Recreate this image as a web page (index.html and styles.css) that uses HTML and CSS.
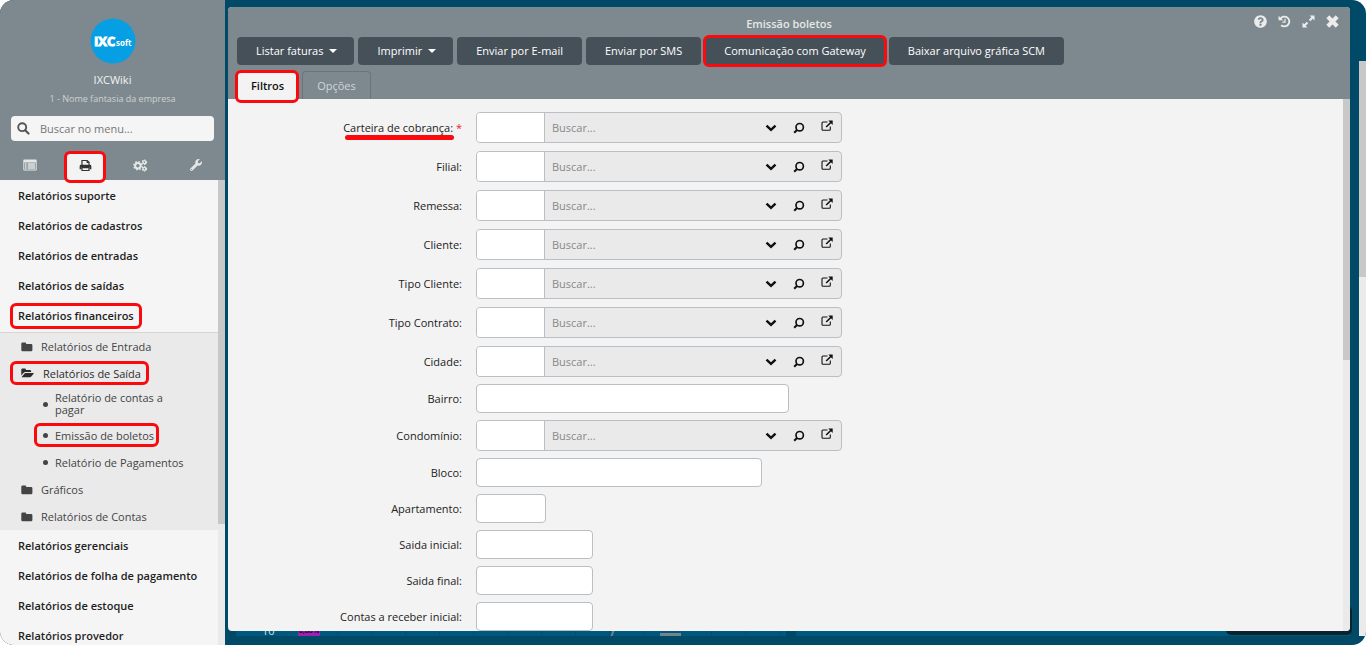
FILE: index.html
```html
<!DOCTYPE html>
<html lang="pt-BR">
<head>
<meta charset="utf-8">
<meta name="viewport" content="width=device-width, initial-scale=1">
<title>Emissão boletos</title>
<link rel="stylesheet" href="styles.css">
</head>
<body>
<svg class="sprite" aria-hidden="true">
  <symbol id="i-search" viewBox="0 0 14 14"><circle cx="5.6" cy="5.6" r="4.3" fill="none" stroke="currentColor" stroke-width="2"/><path d="M8.8 8.8l3.6 3.6" stroke="currentColor" stroke-width="2.3" stroke-linecap="round"/></symbol>
  <symbol id="i-list" viewBox="0 0 14 12"><path fill="currentColor" fill-rule="evenodd" d="M1.2 0.5h11.6q.9 0 .9.9v9.2q0 .9-.9.9H1.2q-.9 0-.9-.9V1.4q0-.9.9-.9zM1.3 3.4v7.1h11.4V3.4z"/><path d="M2 5h1.6M2 7h1.6M2 9h1.6M4.600 5h7.400M4.600 7h7.400M4.600 9h7.400" stroke="currentColor" stroke-width="1.400"/></symbol>
  <symbol id="i-print" viewBox="0 0 14 14"><path fill="none" stroke="currentColor" stroke-width="1.300" d="M3.200 6.500V1.600h5.600l2 2v2.900M3.200 9.200h7.600v3.200H3.200z"/><path fill="currentColor" d="M2.200 6.200h9.600q1.500 0 1.500 1.500v3.300h-1.900V8.600H2.600V11H.7V7.700q0-1.500 1.500-1.500zM8.200 1.200v3h2.900z"/></symbol>
  <symbol id="i-cogs" viewBox="0 0 16 14"><g fill="none" stroke="currentColor"><circle cx="5.2" cy="7.2" r="3" stroke-width="2.200"/><circle cx="5.2" cy="7.2" r="4.400" stroke-width="1.500" stroke-dasharray="1.73 1.73"/><circle cx="12.200" cy="3.400" r="1.600" stroke-width="1.500"/><circle cx="12.200" cy="3.400" r="2.400" stroke-width="1.100" stroke-dasharray="1.250 1.250"/><circle cx="12.200" cy="10.600" r="1.600" stroke-width="1.500"/><circle cx="12.200" cy="10.600" r="2.400" stroke-width="1.100" stroke-dasharray="1.250 1.250"/></g></symbol>
  <symbol id="i-wrench" viewBox="0 0 512 512"><path fill="currentColor" d="M507.73 109.1c-2.24-9.03-13.54-12.09-20.12-5.51l-74.36 74.36-67.88-11.31-11.31-67.88 74.36-74.36c6.62-6.62 3.43-17.9-5.66-20.16-47.38-11.74-99.55.91-136.58 37.93-39.64 39.64-50.55 97.1-34.05 147.2L18.74 402.76c-24.99 24.99-24.99 65.51 0 90.5 24.99 24.99 65.51 24.99 90.5 0l213.21-213.21c50.12 16.71 107.47 5.68 147.37-34.22 37.07-37.07 49.7-89.32 37.91-136.73zM64 472c-13.25 0-24-10.75-24-24 0-13.26 10.75-24 24-24s24 10.74 24 24c0 13.25-10.75 24-24 24z"/></symbol>
  <symbol id="i-folder" viewBox="0 0 12 10"><path fill="currentColor" d="M1.5.5h2.7q1 0 1 1v.4h4.900q1.300 0 1.300 1.300v4.700q0 1.300-1.300 1.300H1.600Q.3 9.200.3 7.900V1.700Q.3.500 1.500.500z"/></symbol>
  <symbol id="i-folder-open" viewBox="0 0 13 10"><path fill="currentColor" d="M.3 7.400V1.700Q.3.500 1.500.500h2.400q1 0 1 1v.4h4q1.200 0 1.200 1.200v.900H4.400q-1.200 0-2 1zM.7 9L3.300 5.700q.5-.7 1.400-.7h7.600q.8 0 .3.700L10.300 8.600q-.5.700-1.400.7H1q-.6 0-.3-.3z"/></symbol>
  <symbol id="i-help" viewBox="0 0 512 512"><path fill="currentColor" d="M504 256c0 136.997-111.043 248-248 248S8 392.997 8 256C8 119.083 119.043 8 256 8s248 111.083 248 248zM262.655 90c-54.497 0-89.255 22.957-116.549 63.758-3.536 5.286-2.353 12.415 2.715 16.258l34.699 26.31c5.205 3.947 12.621 3.008 16.665-2.122 17.864-22.658 30.113-35.797 57.303-35.797 20.429 0 45.698 13.148 45.698 32.958 0 14.976-12.363 22.667-32.534 33.976C247.128 238.528 216 254.941 216 296v4c0 6.627 5.373 12 12 12h56c6.627 0 12-5.373 12-12v-1.333c0-28.462 83.186-29.647 83.186-106.667 0-58.002-60.165-102-116.531-102zM256 338c-25.365 0-46 20.635-46 46 0 25.364 20.635 46 46 46s46-20.636 46-46c0-25.365-20.635-46-46-46z"/></symbol>
  <symbol id="i-history" viewBox="0 0 14 14"><path fill="none" stroke="currentColor" stroke-width="2" d="M2.600 3.900A5.300 5.300 0 1 1 3.400 11"/><path fill="currentColor" d="M.6.900L5.500 5.600H.6z"/><path fill="none" stroke="currentColor" stroke-width="1.300" d="M7.500 4v3.600H4.800"/></symbol>
  <symbol id="i-expand" viewBox="0 0 14 14"><path fill="currentColor" d="M8.200.5h5.300v5.300zM.5 8.200v5.300h5.300z"/><path stroke="currentColor" stroke-width="2.200" d="M11.400 2.600L8.100 5.900M5.900 8.100L2.600 11.400"/></symbol>
  <symbol id="i-close" viewBox="0 0 14 14"><path stroke="currentColor" stroke-width="4.400" stroke-linecap="square" d="M3.500 3.500l7 7M10.500 3.500l-7 7"/></symbol>
  <symbol id="i-chevron" viewBox="0 0 12 8"><path fill="none" stroke="currentColor" stroke-width="2.500" d="M1.500 1.700L6 5.800l4.500-4.100"/></symbol>
  <symbol id="i-lens" viewBox="0 0 12 12"><circle cx="6.700" cy="5.200" r="3.700" fill="none" stroke="currentColor" stroke-width="1.700"/><path d="M4 8L1.200 10.800" stroke="currentColor" stroke-width="2.100"/></symbol>
  <symbol id="i-open" viewBox="0 0 12 12"><path fill="none" stroke="currentColor" stroke-width="1.100" d="M6.500 2H2Q1 2 1 3v6.300q0 1 1 1h6.300q1 0 1-1V6.500"/><path fill="currentColor" d="M7.300.5h4.400v4.400z"/><path stroke="currentColor" stroke-width="1.600" d="M10.500 1.700L5.200 7"/></symbol>
</svg>

<div class="app">
  <aside class="sidebar">
    <header class="profile">
      <svg class="avatar" viewBox="0 0 46 46" role="img" aria-label="IXC soft"><circle cx="23" cy="23" r="22.500" fill="#069fe3"/><text class="logo-main" x="4" y="28">IXC</text><text class="logo-sub" x="26" y="28">soft</text></svg>
      <div class="user-name">IXCWiki</div>
      <div class="company">1 - Nome fantasia da empresa</div>
      <label class="menu-search">
        <svg class="icon-13"><use href="#i-search"/></svg>
        <input type="text" placeholder="Buscar no menu..." aria-label="Buscar no menu">
      </label>
      <div class="menu-tabs">
        <button type="button" aria-label="Cadastros"><svg class="icon-list"><use href="#i-list"/></svg></button>
        <button type="button" class="active marked" aria-label="Relatórios"><svg class="icon-13"><use href="#i-print"/></svg></button>
        <button type="button" aria-label="Configurações"><svg class="icon-15"><use href="#i-cogs"/></svg></button>
        <button type="button" aria-label="Ferramentas"><svg class="icon-12"><use href="#i-wrench"/></svg></button>
      </div>
    </header>
    <div class="menu-scroll">
      <nav class="menu">
        <a class="group" href="#">Relatórios suporte</a>
        <a class="group" href="#">Relatórios de cadastros</a>
        <a class="group" href="#">Relatórios de entradas</a>
        <a class="group" href="#">Relatórios de saídas</a>
        <a class="group" href="#"><span class="marked mark-group">Relatórios financeiros</span></a>
        <div class="submenu">
          <a class="folder" href="#"><svg class="icon-folder"><use href="#i-folder"/></svg>Relatórios de Entrada</a>
          <a class="folder open" href="#"><span class="marked mark-folder"><svg class="icon-folder-open"><use href="#i-folder-open"/></svg>Relatórios de Saída</span></a>
          <a class="leaf tall" href="#"><span>Relatório de contas a pagar</span></a>
          <a class="leaf" href="#"><span class="marked mark-leaf">Emissão de boletos</span></a>
          <a class="leaf" href="#"><span>Relatório de Pagamentos</span></a>
          <a class="folder" href="#"><svg class="icon-folder"><use href="#i-folder"/></svg>Gráficos</a>
          <a class="folder" href="#"><svg class="icon-folder"><use href="#i-folder"/></svg>Relatórios de Contas</a>
        </div>
        <a class="group" href="#">Relatórios gerenciais</a>
        <a class="group" href="#">Relatórios de folha de pagamento</a>
        <a class="group" href="#">Relatórios de estoque</a>
        <a class="group" href="#">Relatórios provedor</a>
      </nav>
      <div class="scrollbar"><div class="thumb thumb-menu"></div></div>
    </div>
  </aside>

  <div class="desktop">
    <div class="backdrop" aria-hidden="true">
      <div class="chart"><span class="axis">10</span><span class="bar-label">8,88%</span><i class="slash"></i><i class="curve"></i></div>
      <div class="chart chart-wide"></div>
    </div>
    <div class="toast"></div>
    <div class="page-scroll"><div class="thumb thumb-page"></div></div>

    <main class="window">
      <header class="window-head">
        <div class="title-bar">
          <h1>Emissão boletos</h1>
          <div class="window-tools">
            <button type="button" aria-label="Ajuda"><svg class="icon-13"><use href="#i-help"/></svg></button>
            <button type="button" aria-label="Histórico"><svg class="icon-13"><use href="#i-history"/></svg></button>
            <button type="button" aria-label="Expandir"><svg class="icon-13"><use href="#i-expand"/></svg></button>
            <button type="button" aria-label="Fechar"><svg class="icon-13"><use href="#i-close"/></svg></button>
          </div>
        </div>
        <div class="toolbar">
          <button type="button">Listar faturas<i class="caret"></i></button>
          <button type="button">Imprimir<i class="caret"></i></button>
          <button type="button">Enviar por E-mail</button>
          <button type="button">Enviar por SMS</button>
          <button type="button" class="marked">Comunicação com Gateway</button>
          <button type="button">Baixar arquivo gráfica SCM</button>
        </div>
        <div class="tabs">
          <button type="button" class="selected marked">Filtros</button>
          <button type="button">Opções</button>
        </div>
      </header>
      <div class="window-body">
        <form class="form">
          <div class="rows lookups">
            <div class="row"><label for="f1"><span class="underlined">Carteira de cobrança:</span> <b class="required">*</b></label><div class="lookup"><input id="f1" class="code" type="text"><input class="text" type="text" placeholder="Buscar..." aria-label="Buscar carteira"><button type="button" aria-label="Abrir lista"><svg class="icon-chevron"><use href="#i-chevron"/></svg></button><button type="button" aria-label="Pesquisar"><svg class="icon-12"><use href="#i-lens"/></svg></button><button type="button" aria-label="Abrir cadastro"><svg class="icon-12 raised"><use href="#i-open"/></svg></button></div></div>
            <div class="row"><label for="f2">Filial:</label><div class="lookup"><input id="f2" class="code" type="text"><input class="text" type="text" placeholder="Buscar..." aria-label="Buscar filial"><button type="button" aria-label="Abrir lista"><svg class="icon-chevron"><use href="#i-chevron"/></svg></button><button type="button" aria-label="Pesquisar"><svg class="icon-12"><use href="#i-lens"/></svg></button><button type="button" aria-label="Abrir cadastro"><svg class="icon-12 raised"><use href="#i-open"/></svg></button></div></div>
            <div class="row"><label for="f3">Remessa:</label><div class="lookup"><input id="f3" class="code" type="text"><input class="text" type="text" placeholder="Buscar..." aria-label="Buscar remessa"><button type="button" aria-label="Abrir lista"><svg class="icon-chevron"><use href="#i-chevron"/></svg></button><button type="button" aria-label="Pesquisar"><svg class="icon-12"><use href="#i-lens"/></svg></button><button type="button" aria-label="Abrir cadastro"><svg class="icon-12 raised"><use href="#i-open"/></svg></button></div></div>
            <div class="row"><label for="f4">Cliente:</label><div class="lookup"><input id="f4" class="code" type="text"><input class="text" type="text" placeholder="Buscar..." aria-label="Buscar cliente"><button type="button" aria-label="Abrir lista"><svg class="icon-chevron"><use href="#i-chevron"/></svg></button><button type="button" aria-label="Pesquisar"><svg class="icon-12"><use href="#i-lens"/></svg></button><button type="button" aria-label="Abrir cadastro"><svg class="icon-12 raised"><use href="#i-open"/></svg></button></div></div>
            <div class="row"><label for="f5">Tipo Cliente:</label><div class="lookup"><input id="f5" class="code" type="text"><input class="text" type="text" placeholder="Buscar..." aria-label="Buscar tipo de cliente"><button type="button" aria-label="Abrir lista"><svg class="icon-chevron"><use href="#i-chevron"/></svg></button><button type="button" aria-label="Pesquisar"><svg class="icon-12"><use href="#i-lens"/></svg></button><button type="button" aria-label="Abrir cadastro"><svg class="icon-12 raised"><use href="#i-open"/></svg></button></div></div>
            <div class="row"><label for="f6">Tipo Contrato:</label><div class="lookup"><input id="f6" class="code" type="text"><input class="text" type="text" placeholder="Buscar..." aria-label="Buscar tipo de contrato"><button type="button" aria-label="Abrir lista"><svg class="icon-chevron"><use href="#i-chevron"/></svg></button><button type="button" aria-label="Pesquisar"><svg class="icon-12"><use href="#i-lens"/></svg></button><button type="button" aria-label="Abrir cadastro"><svg class="icon-12 raised"><use href="#i-open"/></svg></button></div></div>
            <div class="row"><label for="f7">Cidade:</label><div class="lookup"><input id="f7" class="code" type="text"><input class="text" type="text" placeholder="Buscar..." aria-label="Buscar cidade"><button type="button" aria-label="Abrir lista"><svg class="icon-chevron"><use href="#i-chevron"/></svg></button><button type="button" aria-label="Pesquisar"><svg class="icon-12"><use href="#i-lens"/></svg></button><button type="button" aria-label="Abrir cadastro"><svg class="icon-12 raised"><use href="#i-open"/></svg></button></div></div>
          </div>
          <div class="rows">
            <div class="row"><label for="f8">Bairro:</label><input id="f8" class="field w-xl" type="text"></div>
            <div class="row"><label for="f9">Condomínio:</label><div class="lookup"><input id="f9" class="code" type="text"><input class="text" type="text" placeholder="Buscar..." aria-label="Buscar condomínio"><button type="button" aria-label="Abrir lista"><svg class="icon-chevron"><use href="#i-chevron"/></svg></button><button type="button" aria-label="Pesquisar"><svg class="icon-12"><use href="#i-lens"/></svg></button><button type="button" aria-label="Abrir cadastro"><svg class="icon-12 raised"><use href="#i-open"/></svg></button></div></div>
            <div class="row"><label for="f10">Bloco:</label><input id="f10" class="field w-lg" type="text"></div>
            <div class="row"><label for="f11">Apartamento:</label><input id="f11" class="field w-sm" type="text"></div>
            <div class="row"><label for="f12">Saida inicial:</label><input id="f12" class="field w-md" type="text"></div>
            <div class="row"><label for="f13">Saida final:</label><input id="f13" class="field w-md" type="text"></div>
            <div class="row"><label for="f14">Contas a receber inicial:</label><input id="f14" class="field w-md" type="text"></div>
          </div>
        </form>
        <div class="scrollbar"><div class="thumb thumb-window"></div></div>
      </div>
    </main>
  </div>
</div>
</body>
</html>
```
FILE: styles.css
```css
* { box-sizing: border-box; }
body { margin: 0; background: #fff; color: #222; font: 11px/15px "Open Sans", "Noto Sans", sans-serif; }
button, input { font: inherit; color: inherit; }
button { border: 0; padding: 0; background: none; display: flex; align-items: center; justify-content: center; }
a { color: inherit; text-decoration: none; }
svg { flex: none; display: block; }
.sprite { position: absolute; width: 0; height: 0; }

.icon-12 { width: 12px; height: 12px; }
.icon-13 { width: 13px; height: 13px; }
.icon-15 { width: 15px; height: 13px; }
.icon-list { width: 14px; height: 12px; }
.icon-folder { width: 12px; height: 10px; }
.icon-folder-open { width: 13px; height: 10px; }
.icon-chevron { width: 12px; height: 8px; }
.raised { margin-bottom: 3px; }

.app { display: flex; height: 100vh; border-radius: 14px; overflow: hidden; background: #004967; }

/* red highlight frames */
.marked { position: relative; }
.marked::after { content: ""; position: absolute; inset: -2px; border: 3px solid #fa0a0c; border-radius: 6px; pointer-events: none; z-index: 2; }
.mark-group::after { inset: -5px -8px -6px; }
.mark-folder::after { inset: -5px -8px -4px -11px; }
.mark-leaf::after { inset: -5px -5px -4px -21px; }
.tabs .marked::after { inset: -2px -2px -4px -3px; }

/* sidebar */
.sidebar { width: 225px; flex: none; display: flex; flex-direction: column; background: #7d898e; }
.profile { height: 180px; flex: none; display: flex; flex-direction: column; padding-top: 18px; }
.avatar { width: 46px; height: 46px; align-self: center; }
.logo-main { font: 700 13px "Open Sans", sans-serif; fill: #fff; stroke: #fff; }
.logo-sub { font: 700 8px "Open Sans", sans-serif; fill: #fff; }
.user-name { margin-top: 8px; text-align: center; color: #f3f3f3; }
.company { margin-top: 4px; text-align: center; font-size: 9px; color: #cdd2d4; }
.menu-search { margin: 10px 11px 0; height: 25px; flex: none; display: flex; align-items: center; gap: 10px; padding: 0 6px; border-radius: 4px; background: #f5f5f5; color: #555; }
.menu-search input { flex: 1; min-width: 0; border: 0; padding: 0; background: none; outline: 0; }
.menu-search input::placeholder { color: #777; }
.menu-tabs { flex: 1; display: grid; grid-template-columns: repeat(4, 1fr); padding: 11px 1px 0 2px; color: #e4e7e8; }
.menu-tabs button { height: 28px; width: 38px; padding-bottom: 2px; justify-self: center; }
.menu-tabs .active { background: #f3f3f3; color: #333; border-radius: 4px; }
.menu-tabs .marked::after { inset: -1px -2px -3px; }
.menu-scroll { flex: 1; min-height: 0; display: flex; }
.menu { flex: 1; overflow: hidden; background: #f5f5f5; }
.group { display: flex; align-items: center; height: 30px; padding-left: 18px; font-weight: 600; color: #1e1e1e; }
.submenu { margin-top: 2px; border-top: 1px solid #d6d6d6; background: #eaeaea; color: #444; }
.folder { display: flex; align-items: center; gap: 8px; height: 27px; padding-left: 21px; }
.folder.open { height: 26px; }
.folder span { display: flex; align-items: center; gap: 9px; color: #2c2c2c; }
.leaf { display: flex; align-items: center; gap: 7px; height: 27px; padding: 0 40px 0 43px; line-height: 12px; white-space: nowrap; }
.leaf::before { content: ""; width: 5px; height: 5px; flex: none; border-radius: 50%; background: #444; }
.leaf.tall { height: 36px; white-space: normal; }
.leaf span { line-height: 15px; }
.leaf.tall span { line-height: 12px; }

.scrollbar { width: 7px; flex: none; background: #eaeaea; }
.thumb { background: #c8c8c8; }
.thumb-menu { height: 74%; }
.thumb-window { height: 49%; }
.thumb-page { height: 216px; }

/* desktop behind the window */
.desktop { position: relative; flex: 1; min-width: 0; display: flex; padding: 7px 16px 14px 3px; }
.backdrop { position: absolute; inset: auto 16px 9px 11px; height: 16px; display: flex; gap: 10px; }
.chart { position: relative; width: 550px; background: repeating-linear-gradient(90deg, #00587c 0 33px, #004f70 33px 34px); }
.chart-wide { flex: 1; background: #00587c; }
.axis, .bar-label { position: absolute; bottom: 0; left: 26px; font-size: 11px; line-height: 11px; color: #d8e2e6; }
.bar-label { left: 62px; width: 22px; background: #9b22b5; color: #111; font-size: 7px; line-height: 8px; padding-bottom: 1px; font-weight: 700; text-align: center; }
.slash { position: absolute; bottom: 0; left: 376px; width: 2px; height: 8px; background: #75838a; transform: skewX(-20deg); }
.curve { position: absolute; bottom: 0; left: 424px; width: 21px; height: 3px; background: #75838a; }
.toast { position: absolute; right: 14px; bottom: 10px; width: 126px; height: 29px; border-radius: 5px; background: #0b232c; }
.page-scroll { position: absolute; top: 61px; right: 0; bottom: 9px; width: 7px; background: #ebebeb; }

/* window */
.window { position: relative; flex: 1; min-width: 0; display: flex; flex-direction: column; border-radius: 4px; overflow: hidden; background: #f3f3f3; }
.window-head { flex: none; padding: 0 9px; background: #7d898e; }
.title-bar { display: grid; grid-template-columns: 1fr auto 1fr; height: 30px; align-items: center; }
.title-bar h1 { grid-column: 2; margin: 3px 0 0; font-size: 11px; line-height: 15px; font-weight: 600; color: #e6e8e9; }
.window-tools { display: flex; justify-content: flex-end; gap: 11px; padding: 0 2px 2px 0; color: #ececec; }
.toolbar { display: flex; gap: 4px; }
.toolbar button { height: 28px; padding: 0 19px 1px; border-radius: 4px; background: #465059; color: #fff; white-space: nowrap; }
.toolbar .caret { margin-left: 6px; border: 4px solid transparent; border-top-color: #fff; border-bottom: 0; }
.toolbar button:has(.caret) { padding-right: 17px; }
.tabs { display: flex; gap: 4px; padding-top: 6px; }
.tabs button { height: 28px; padding: 0 14px; border: 1px solid #69757b; border-bottom: 0; border-radius: 4px 4px 0 0; color: #d0d5d7; }
.tabs .selected { padding: 0 13px; border-color: #f3f3f3; background: #f3f3f3; color: #111; font-weight: 600; }
.window-body { flex: 1; min-height: 0; display: flex; }
.form { flex: 1; min-width: 0; overflow: hidden; padding-top: 13px; }
.rows { display: flex; flex-direction: column; gap: 7px; }
.lookups { gap: 8px; margin-bottom: 7px; }
.row { display: grid; grid-template-columns: 234px 1fr; column-gap: 14px; align-items: center; }
.row label { text-align: right; }
.required { color: #e22; font-weight: 400; }
.underlined { position: relative; }
.underlined::after { content: ""; position: absolute; left: 2px; right: -1px; bottom: -5px; height: 5px; border-radius: 3px; background: #fa0a0c; }
.lookup { display: flex; width: 366px; height: 31px; border: 1px solid #b9bfc4; border-radius: 4px; background: #eaeaea; overflow: hidden; color: #111; }
.lookup input { border: 0; outline: 0; min-width: 0; }
.lookup .code { width: 68px; background: #fff; border-right: 1px solid #b9bfc4; }
.lookup .text { flex: 1; padding: 1px 7px; background: none; }
.lookup .text::placeholder { color: #888; }
.lookup button { width: 28px; }
.field { height: 29px; border: 1px solid #b9bfc4; border-radius: 4px; background: #fff; outline: 0; }
.w-xl { width: 313px; }
.w-lg { width: 286px; }
.w-md { width: 117px; }
.w-sm { width: 70px; }
```
